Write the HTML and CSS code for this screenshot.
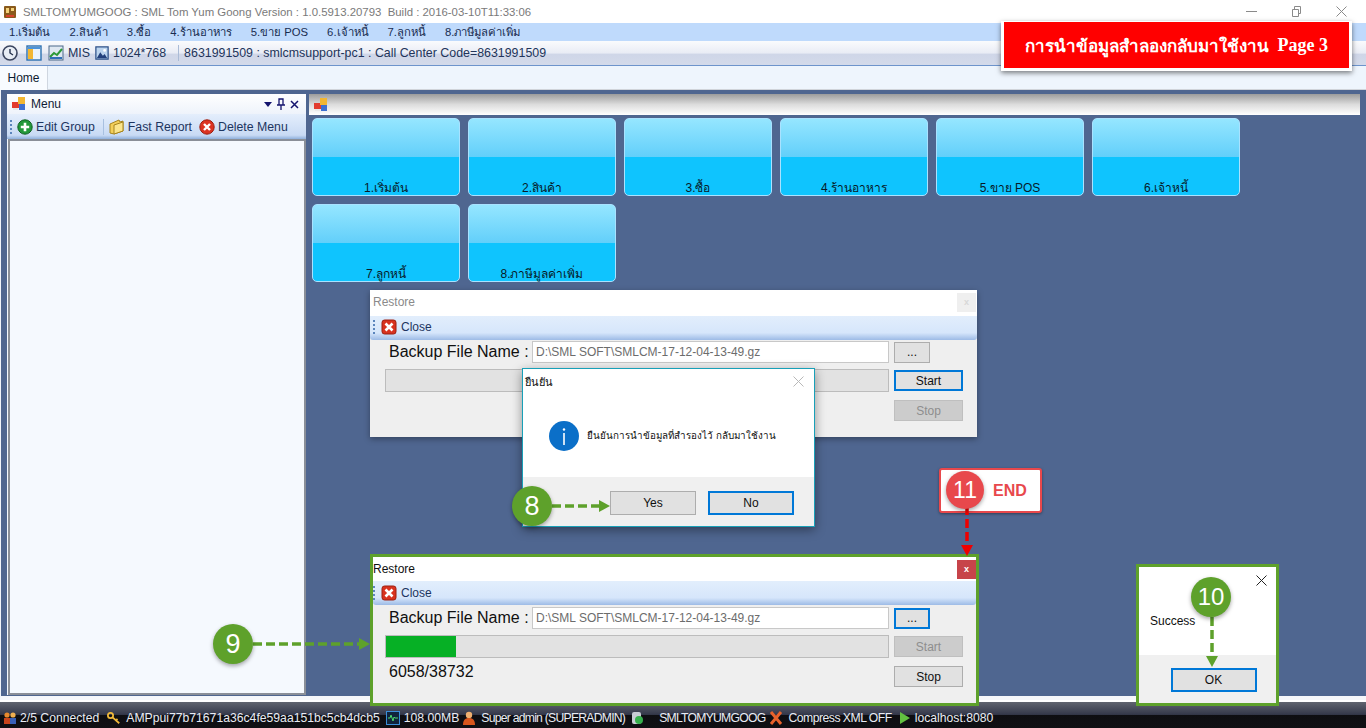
FILE: index.html
```html
<!doctype html>
<html lang="en">
    <head>
        <meta charset="UTF-8" />
        <meta name="viewport" content="width=device-width, initial-scale=1.0" />
        <title>SMLTOMYUMGOOG</title>
        <link rel="stylesheet" href="styles.css">
    </head>
    <body>
        <svg class="sprites" width="0" height="0">
            <symbol id="i-panel" viewBox="0 0 14 14">
                <rect x="0" y="5" width="7" height="6" fill="#e23b2e"/>
                <rect x="6" y="0" width="7" height="7" fill="#f2b632"/>
                <rect x="7" y="7" width="6" height="6" fill="#3d6fd0"/>
                <rect x="1" y="11" width="5" height="2" fill="#e8e8e8"/>
            </symbol>
            <symbol id="i-close" viewBox="0 0 16 16">
                <rect x="1" y="1" width="14" height="14" rx="2.5" fill="#d8321f" stroke="#9c1f10"/>
                <path d="M4.5 4.5l7 7M11.5 4.5l-7 7" stroke="#fff" stroke-width="2.6"/>
            </symbol>
        </svg>

        <div class="titlebar">
            <svg class="app-icon" width="12" height="12" viewBox="0 0 12 12">
                <rect width="12" height="12" rx="1" fill="#8a5a1c"/>
                <rect x="2" y="2" width="3" height="5" fill="#f4d27a"/>
                <rect x="7" y="2" width="3" height="3" fill="#f4d27a"/>
                <rect x="2" y="9" width="8" height="2" fill="#d8432c"/>
            </svg>
            <span class="grow">SMLTOMYUMGOOG : SML Tom Yum Goong Version : 1.0.5913.20793&nbsp; Build : 2016-03-10T11:33:06</span>
            <div class="winctl">
                <svg width="11" height="11" viewBox="0 0 11 11"><path d="M0 5.5h11" stroke="#8a8a8a"/></svg>
                <svg width="11" height="11" viewBox="0 0 11 11"><path d="M1.5 3.5h6v7h-6zM3.5 3.5v-3h6v7h-2" fill="none" stroke="#8a8a8a"/></svg>
                <svg width="11" height="11" viewBox="0 0 11 11"><path d="M.5.5l10 10M10.5.5l-10 10" stroke="#8a8a8a"/></svg>
            </div>
        </div>

        <nav class="menubar">
            <span>1.เริ่มต้น</span>
            <span>2.สินค้า</span>
            <span>3.ซื้อ</span>
            <span>4.ร้านอาหาร</span>
            <span>5.ขาย POS</span>
            <span>6.เจ้าหนี้</span>
            <span>7.ลูกหนี้</span>
            <span>8.ภาษีมูลค่าเพิ่ม</span>
        </nav>

        <div class="toolbar">
            <svg width="16" height="16" viewBox="0 0 16 16">
                <circle cx="8" cy="8" r="7" fill="#e8edf5" stroke="#3c4660" stroke-width="1.6"/>
                <path d="M8 4v4l3 2" fill="none" stroke="#24304c" stroke-width="1.4"/>
            </svg>
            <svg class="tb-panel" width="16" height="16" viewBox="0 0 16 16">
                <rect x="1" y="1" width="14" height="14" fill="#eaf3fc" stroke="#2c6fb0" stroke-width="1.4"/>
                <rect x="2" y="2" width="5" height="12" fill="#f2b632"/>
                <rect x="2" y="2" width="12" height="2" fill="#4f94d8"/>
            </svg>
            <svg class="tb-chart" width="16" height="16" viewBox="0 0 16 16">
                <rect x="1" y="1" width="14" height="14" fill="#dfe8f2" stroke="#4c6a8a"/>
                <path d="M2 12l4-4 3 2 5-6" fill="none" stroke="#2c9a38" stroke-width="2"/>
                <rect x="2" y="12" width="12" height="2" fill="#2f6fb8"/>
            </svg>
            <span>MIS</span>
            <svg class="tb-image" width="14" height="16" viewBox="0 0 16 16">
                <rect x="1" y="1" width="14" height="14" fill="#bcd4ee" stroke="#2c4f88" stroke-width="1.4"/>
                <path d="M2 14l4-7 3 4 2-2 3 5z" fill="#23407c"/>
                <circle cx="11" cy="5" r="1.6" fill="#fff"/>
            </svg>
            <span>1024*768</span>
            <i class="toolbar-sep"></i>
            <span>8631991509 : smlcmsupport-pc1 : Call Center Code=8631991509</span>
        </div>

        <div class="tabstrip">
            <div class="tab">Home</div>
        </div>

        <main class="workspace">
            <aside class="panel">
                <div class="panel-title">
                    <svg width="14" height="14"><use href="#i-panel"/></svg>
                    <span class="grow">Menu</span>
                    <i class="pin-arrow"></i>
                    <svg width="8" height="12" viewBox="0 0 8 12">
                        <path d="M2 1h4v6H2zM0 7h8M4 7v5" fill="none" stroke="#14146e" stroke-width="1.3"/>
                    </svg>
                    <svg width="9" height="9" viewBox="0 0 9 9">
                        <path d="M1 1l7 7M8 1l-7 7" stroke="#14146e" stroke-width="1.5"/>
                    </svg>
                </div>
                <div class="panel-tools">
                    <i class="grip"></i>
                    <svg width="16" height="16" viewBox="0 0 16 16">
                        <circle cx="8" cy="8" r="7.2" fill="#22983a" stroke="#106024"/>
                        <path d="M8 3.8v8.4M3.8 8h8.4" stroke="#fff" stroke-width="2.6"/>
                    </svg>
                    <span>Edit Group</span>
                    <i class="tool-sep"></i>
                    <svg width="16" height="16" viewBox="0 0 16 16">
                        <path d="M1 5l9-4 1 2 3-1v10l-9 3-4-1z" fill="#f3cf5a" stroke="#a8851e"/>
                        <path d="M5 6l9-3v9l-9 3z" fill="#fbe58c" stroke="#a8851e"/>
                    </svg>
                    <span>Fast Report</span>
                    <svg class="tool-gap" width="16" height="16" viewBox="0 0 16 16">
                        <circle cx="8" cy="8" r="7.2" fill="#dc3322" stroke="#9c1f10"/>
                        <path d="M5 5l6 6M11 5l-6 6" stroke="#fff" stroke-width="2.4"/>
                    </svg>
                    <span>Delete Menu</span>
                </div>
                <div class="panel-list"></div>
            </aside>

            <section class="desktop">
                <div class="desktop-head">
                    <svg width="14" height="14"><use href="#i-panel"/></svg>
                </div>
                <div class="tiles">
                    <div class="tile">1.เริ่มต้น</div>
                    <div class="tile">2.สินค้า</div>
                    <div class="tile">3.ซื้อ</div>
                    <div class="tile">4.ร้านอาหาร</div>
                    <div class="tile">5.ขาย POS</div>
                    <div class="tile">6.เจ้าหนี้</div>
                    <div class="tile">7.ลูกหนี้</div>
                    <div class="tile">8.ภาษีมูลค่าเพิ่ม</div>
                </div>
            </section>
        </main>

        <footer class="statusbar">
            <svg width="14" height="14" viewBox="0 0 14 14">
                <circle cx="4" cy="4" r="2.6" fill="#e88a2c"/><rect x="1" y="7" width="6" height="6" fill="#c8441c"/>
                <circle cx="10" cy="4" r="2.6" fill="#f0b050"/><rect x="7" y="7" width="6" height="6" fill="#3860b8"/>
            </svg>
            <span class="st-users">2/5 Connected</span>
            <svg class="st-key" width="14" height="14" viewBox="0 0 16 14">
                <circle cx="4" cy="4" r="3" fill="none" stroke="#f0b93a" stroke-width="2"/>
                <path d="M6 6l8 7M10 10l2-2" stroke="#f0b93a" stroke-width="2"/>
            </svg>
            <span>AMPpui77b71671a36c4fe59aa151bc5cb4dcb5</span>
            <svg class="st-mem" width="14" height="14" viewBox="0 0 14 14">
                <rect x=".5" y=".5" width="13" height="13" fill="#10243c" stroke="#3a8ed8"/>
                <path d="M2 7h2l1-3 2 6 1-4 1 1h3" fill="none" stroke="#4cd86c"/>
            </svg>
            <span>108.00MB</span>
            <svg width="12" height="14" viewBox="0 0 12 14">
                <circle cx="6" cy="4" r="3.2" fill="#f0b070"/><path d="M0 14c0-6 3-7 6-7s6 1 6 7z" fill="#d8561c"/>
            </svg>
            <span class="st-caps st-user">Super admin (SUPERADMIN)</span>
            <svg class="st-db" width="14" height="14" viewBox="0 0 14 14">
                <rect x="2" y="1" width="9" height="12" rx="2" fill="#c8ccd4"/><circle cx="9" cy="9" r="4" fill="#36b04c"/>
            </svg>
            <span class="st-caps st-name">SMLTOMYUMGOOG</span>
            <svg width="14" height="14" viewBox="0 0 14 14">
                <path d="M2 1l10 12M12 1L2 13" stroke="#e8622c" stroke-width="3"/>
            </svg>
            <span class="st-xml">Compress XML OFF</span>
            <svg class="st-play" width="12" height="14" viewBox="0 0 12 14">
                <path d="M1 1l10 6-10 6z" fill="#62c040"/>
            </svg>
            <span>localhost:8080</span>
        </footer>

        <!-- floating windows -->
        <div class="win win-first">
            <div class="win-title win-title-off">
                <span class="grow">Restore</span>
                <i class="win-x win-x-off">x</i>
            </div>
            <div class="win-tools">
                <i class="grip"></i>
                <svg width="16" height="16"><use href="#i-close"/></svg>
                <span>Close</span>
            </div>
            <div class="file-row">
                <label>Backup File Name :</label>
                <div class="file-input">D:\SML SOFT\SMLCM-17-12-04-13-49.gz</div>
                <div class="btn btn-dots">...</div>
            </div>
            <div class="progress-row">
                <div class="progress"></div>
                <div class="btn btn-side btn-focus">Start</div>
            </div>
            <div class="stop-row">
                <div class="btn btn-side btn-off">Stop</div>
            </div>
        </div>

        <div class="dialog">
            <div class="dialog-title">
                <span class="grow">ยืนยัน</span>
                <svg width="11" height="11" viewBox="0 0 11 11">
                    <path d="M.5.5l10 10M10.5.5l-10 10" stroke="#b8b8b8"/>
                </svg>
            </div>
            <div class="dialog-body">
                <svg width="30" height="30" viewBox="0 0 30 30">
                    <circle cx="15" cy="15" r="15" fill="#0b6fc8"/>
                    <path d="M15 12v12" stroke="#fff" stroke-width="1.6"/>
                    <circle cx="15" cy="8.5" r="1.2" fill="#fff"/>
                </svg>
                <span>ยืนยันการนำข้อมูลที่สำรองไว้ กลับมาใช้งาน</span>
            </div>
            <div class="dialog-foot">
                <div class="btn btn-dlg">Yes</div>
                <div class="btn btn-dlg btn-focus">No</div>
            </div>
        </div>

        <div class="win win-second">
            <div class="win-title">
                <span class="grow">Restore</span>
                <i class="win-x">x</i>
            </div>
            <div class="win-tools">
                <i class="grip"></i>
                <svg width="16" height="16"><use href="#i-close"/></svg>
                <span>Close</span>
            </div>
            <div class="file-row">
                <label>Backup File Name :</label>
                <div class="file-input">D:\SML SOFT\SMLCM-17-12-04-13-49.gz</div>
                <div class="btn btn-dots btn-focus">...</div>
            </div>
            <div class="progress-row">
                <div class="progress"><div class="progress-fill" style="width: 14%"></div></div>
                <div class="btn btn-side btn-off">Start</div>
            </div>
            <div class="stop-row stop-row-count">
                <span class="count">6058/38732</span>
                <div class="btn btn-side">Stop</div>
            </div>
        </div>

        <div class="success">
            <div class="success-x">
                <svg width="11" height="11" viewBox="0 0 11 11">
                    <path d="M.5.5l10 10M10.5.5l-10 10" stroke="#222"/>
                </svg>
            </div>
            <div class="success-body">Success</div>
            <div class="success-foot">
                <div class="btn btn-dlg btn-focus">OK</div>
            </div>
        </div>

        <!-- tutorial annotations -->
        <div class="banner">การนำข้อมูลสำลองกลับมาใช้งาน&nbsp; <b>Page 3</b></div>

        <div class="end-box">END</div>

        <svg class="arrows" width="1366" height="728" viewBox="0 0 1366 728">
            <g stroke="#5ea12b" stroke-width="3.5" stroke-dasharray="9 4" fill="none">
                <path d="M552 506H600"/>
                <path d="M253 644H360"/>
                <path d="M1212 617V657"/>
            </g>
            <g fill="#5ea12b">
                <path d="M599 500l11 6-11 6z"/>
                <path d="M359 638l11 6-11 6z"/>
                <path d="M1206 656l6 11 6-11z"/>
            </g>
            <path d="M967 506V546" stroke="#f00000" stroke-width="3.5" stroke-dasharray="9 4" fill="none"/>
            <path d="M961 545l6 11 6-11z" fill="#f00000"/>
        </svg>

        <div class="step step-8">8</div>
        <div class="step step-9">9</div>
        <div class="step step-10">10</div>
        <div class="step step-11">11</div>
    </body>
</html>
```

FILE: styles.css
```css
* {
    box-sizing: border-box;
}
body {
    margin: 0;
    width: 1366px;
    height: 728px;
    overflow: hidden;
    position: relative;
    display: flex;
    flex-direction: column;
    font-family: "Liberation Sans", "Noto Sans", sans-serif;
    font-size: 12px;
    background: #ffffff;
    color: #1c2a44;
}
.sprites {
    position: absolute;
}
.grow {
    flex: 1;
}
.titlebar {
    height: 23px;
    display: flex;
    align-items: center;
    gap: 7px;
    padding-left: 4px;
    font-size: 11.4px;
    color: #7a7a7a;
    background: #ffffff;
}
.winctl {
    display: flex;
    gap: 34px;
    padding-right: 19px;
}
.menubar {
    height: 18px;
    display: flex;
    align-items: center;
    gap: 19px;
    padding-left: 9px;
    font-size: 11.3px;
    background: #bfdafc;
    color: #182c50;
}
.toolbar {
    height: 25px;
    display: flex;
    align-items: center;
    gap: 4px;
    padding-left: 2px;
    font-size: 12.4px;
    background: linear-gradient(#fafbfd 0%, #e9ecf5 50%, #cfd6e8 55%, #d3daea 100%);
    border-bottom: 1px solid #6d94cc;
    color: #22345a;
}
.tb-panel {
    margin-left: 4px;
}
.tb-chart {
    margin-left: 2px;
}
.tb-image {
    margin-left: 1px;
}
.toolbar-sep {
    width: 1px;
    height: 16px;
    margin: 0 1px 0 8px;
    background: #aabbd6;
}
.tabstrip {
    height: 24px;
    background: #eef5fd;
    border-bottom: 1px solid #d0d4da;
}
.tab {
    width: 48px;
    height: 24px;
    display: flex;
    align-items: center;
    justify-content: center;
    background: #f8fbff;
    border-right: 1px solid #cfd6e0;
    color: #0c1a30;
}
.workspace {
    height: 610px;
    display: flex;
    gap: 3px;
    padding: 4px 6px 4px 6px;
    background: #4f6690;
    border-left: 1px solid #f0f4fa;
    border-bottom: 4px solid #f5f7fb;
}
.panel {
    width: 299px;
    height: 601px;
    display: flex;
    flex-direction: column;
    background: #f4f8fe;
}
.panel-title {
    height: 20px;
    display: flex;
    align-items: center;
    gap: 5px;
    padding: 0 7px 0 5px;
    background: linear-gradient(#ffffff, #eef3fb);
    color: #101c36;
}
.pin-arrow {
    width: 0;
    height: 0;
    border-left: 4px solid transparent;
    border-right: 4px solid transparent;
    border-top: 5px solid #14146e;
}
.panel-tools {
    height: 25px;
    display: flex;
    align-items: center;
    gap: 3px;
    padding-left: 3px;
    font-size: 12.3px;
    background: linear-gradient(#e4eefc, #c8daf4 85%, #8fb0dc);
    color: #1d3560;
}
.grip {
    width: 2px;
    height: 14px;
    margin-right: 2px;
    background: repeating-linear-gradient(#5b85bd 0 2px, transparent 2px 4px);
}
.tool-sep {
    width: 1px;
    height: 16px;
    margin: 0 2px 0 5px;
    background: #a8c0e0;
}
.tool-gap {
    margin-left: 4px;
}
.panel-list {
    flex: 1;
    background: #f5f9fe;
    border: 2px solid #8a8f98;
    margin: 0 0 0 1px;
}
.desktop {
    flex: 1;
    display: flex;
    flex-direction: column;
}
.desktop-head {
    height: 21px;
    display: flex;
    align-items: center;
    padding-left: 5px;
    background: linear-gradient(#9c9c9c, #dcdcdc 50%, #ffffff);
}
.tiles {
    display: flex;
    flex-wrap: wrap;
    gap: 8px;
    padding: 3px 3px;
    width: 950px;
}
.tile {
    width: 148px;
    height: 78px;
    display: flex;
    align-items: flex-end;
    justify-content: center;
    line-height: 13px;
    border: 1px solid #a9e2ff;
    border-radius: 5px;
    background: linear-gradient(#95e6ff 0%, #62cffa 50%, #0fc4fe 50%, #0fc4fe 100%);
    color: #071a28;
}
.statusbar {
    height: 26px;
    margin-top: auto;
    display: flex;
    align-items: flex-end;
    gap: 4px;
    padding: 0 2px 3px 3px;
    font-size: 12.2px;
    background: linear-gradient(#60646f 0%, #34384a 48%, #0e0e12 50%, #101014 100%);
    color: #e9ecf4;
}
.st-users {
    margin-left: -1px;
}
.st-key {
    margin: 0 1px 0 4px;
}
.st-mem {
    margin-left: 2px;
}
.st-caps {
    letter-spacing: -0.75px;
}
.st-user {
    margin-left: 2px;
}
.st-db {
    margin-left: 1px;
}
.st-name {
    margin-left: 11px;
}
.st-xml {
    margin-left: 1px;
    letter-spacing: -0.5px;
}
.st-play {
    margin-left: 3px;
}

/* floating windows */
.win {
    position: absolute;
    left: 370px;
    width: 607px;
    background: #efefef;
    display: flex;
    flex-direction: column;
}
.win-first {
    top: 290px;
    height: 147px;
    box-shadow: 0 2px 6px rgba(0, 0, 0, 0.35);
}
.win-second {
    top: 554px;
    left: 370px;
    width: 609px;
    height: 152px;
    border: 3px solid #5ea12b;
}
.win-title {
    height: 26px;
    display: flex;
    align-items: center;
    padding: 0 1px 2px 3px;
    background: #ffffff;
    color: #101010;
}
.win-second .win-title {
    height: 24px;
    padding: 0;
}
.win-title-off {
    color: #8a8a8a;
}
.win-x {
    width: 19px;
    height: 19px;
    display: flex;
    align-items: center;
    justify-content: center;
    font-style: normal;
    font-size: 9px;
    font-weight: bold;
    background: #c7444a;
    color: #ffffff;
}
.win-x-off {
    background: #efefef;
    color: #d8d8d8;
}
.win-tools {
    height: 24px;
    display: flex;
    align-items: center;
    gap: 4px;
    padding: 0 0 2px 3px;
    background: linear-gradient(#e2eefc, #d6e6fb 70%, #9dbbe6);
    border-radius: 0 0 3px 3px;
    color: #1d3560;
}
.win-second .win-tools {
    padding: 0;
}
.file-row {
    display: flex;
    align-items: center;
    height: 22px;
    margin-top: 1px;
    padding-left: 19px;
}
.win-second .file-row {
    margin-top: 2px;
    padding-left: 16px;
}
.file-row label {
    width: 143px;
    font-size: 16px;
    color: #101010;
    white-space: nowrap;
}
.file-input {
    width: 357px;
    height: 22px;
    padding-left: 3px;
    line-height: 20px;
    background: #ffffff;
    border: 1px solid #c8c8c8;
    color: #6c6c6c;
}
.btn {
    display: flex;
    align-items: center;
    justify-content: center;
    background: #e1e1e1;
    border: 1px solid #adadad;
    color: #101010;
}
.btn-dots {
    width: 36px;
    height: 21px;
    margin-left: 5px;
}
.btn-side {
    width: 69px;
    height: 21px;
    margin-left: 5px;
}
.btn-dlg {
    width: 86px;
    height: 24px;
}
.btn-focus {
    border: 2px solid #0078d7;
}
.btn-off {
    background: #cccccc;
    border-color: #bfbfbf;
    color: #8e8e8e;
}
.progress-row {
    display: flex;
    align-items: center;
    margin-top: 6px;
    padding-left: 15px;
}
.win-second .progress-row {
    padding-left: 12px;
}
.progress {
    width: 504px;
    height: 23px;
    background: #e2e2e2;
    border: 1px solid #bcbcbc;
}
.progress-fill {
    height: 100%;
    background: #06b025;
}
.stop-row {
    display: flex;
    justify-content: flex-end;
    margin-top: 8px;
    padding-right: 14px;
}
.win-second .stop-row {
    padding-right: 13px;
}
.stop-row-count {
    justify-content: space-between;
    padding-left: 16px;
}
.count {
    font-size: 16px;
    color: #101010;
    margin-top: -3px;
}
.dialog {
    position: absolute;
    left: 522px;
    top: 368px;
    width: 293px;
    height: 159px;
    display: flex;
    flex-direction: column;
    background: #ffffff;
    border: 1px solid #18a0b8;
    box-shadow: 0 3px 10px rgba(0, 0, 0, 0.4);
}
.dialog-title {
    height: 25px;
    display: flex;
    align-items: center;
    padding: 0 10px 0 2px;
    font-size: 11px;
    color: #101010;
}
.dialog-body {
    flex: 1;
    display: flex;
    align-items: center;
    gap: 8px;
    padding-left: 26px;
    font-size: 9.8px;
    color: #101010;
}
.dialog-foot {
    height: 49px;
    display: flex;
    justify-content: flex-end;
    gap: 12px;
    padding: 14px 20px 0 0;
    background: #f0f0f0;
}
.success {
    position: absolute;
    left: 1136px;
    top: 564px;
    width: 143px;
    height: 142px;
    display: flex;
    flex-direction: column;
    background: #ffffff;
    border: 3px solid #5ea12b;
    color: #101010;
}
.success-x {
    height: 19px;
    display: flex;
    justify-content: flex-end;
    align-items: flex-end;
    padding-right: 9px;
}
.success-body {
    flex: 1;
    padding: 28px 0 0 11px;
}
.success-foot {
    height: 48px;
    display: flex;
    justify-content: center;
    padding: 13px 0 0 12px;
    background: #f0f0f0;
}

/* tutorial annotations */
.banner {
    position: absolute;
    left: 1001px;
    top: 21px;
    width: 351px;
    height: 50px;
    display: flex;
    align-items: center;
    justify-content: center;
    background: #ff0000;
    border: 3px solid #ffffff;
    border-top-width: 1px;
    box-shadow: 0 2px 5px rgba(0, 0, 0, 0.5);
    font-family: "Liberation Serif", serif;
    font-size: 17px;
    font-weight: bold;
    color: #ffffff;
    white-space: pre;
}
.banner b {
    font-size: 18px;
}
.end-box {
    position: absolute;
    left: 939px;
    top: 468px;
    width: 103px;
    height: 45px;
    padding-left: 52px;
    line-height: 41px;
    background: #ffffff;
    border: 2px solid #e8484c;
    border-radius: 3px;
    box-shadow: 0 1px 3px rgba(0, 0, 0, 0.4);
    font-size: 16px;
    font-weight: bold;
    color: #e8484c;
}
.arrows {
    position: absolute;
    left: 0;
    top: 0;
    pointer-events: none;
}
.step {
    position: absolute;
    width: 40px;
    height: 40px;
    display: flex;
    align-items: center;
    justify-content: center;
    border-radius: 50%;
    background: #5ea12b;
    box-shadow: 0 2px 4px rgba(0, 0, 0, 0.35);
    font-size: 27px;
    color: #ffffff;
}
.step-8 {
    left: 512px;
    top: 486px;
}
.step-9 {
    left: 213px;
    top: 624px;
}
.step-10 {
    left: 1191px;
    top: 577px;
    font-size: 24px;
}
.step-11 {
    left: 946px;
    top: 471px;
    width: 38px;
    height: 38px;
    background: #e8484c;
    font-size: 23px;
}
```
